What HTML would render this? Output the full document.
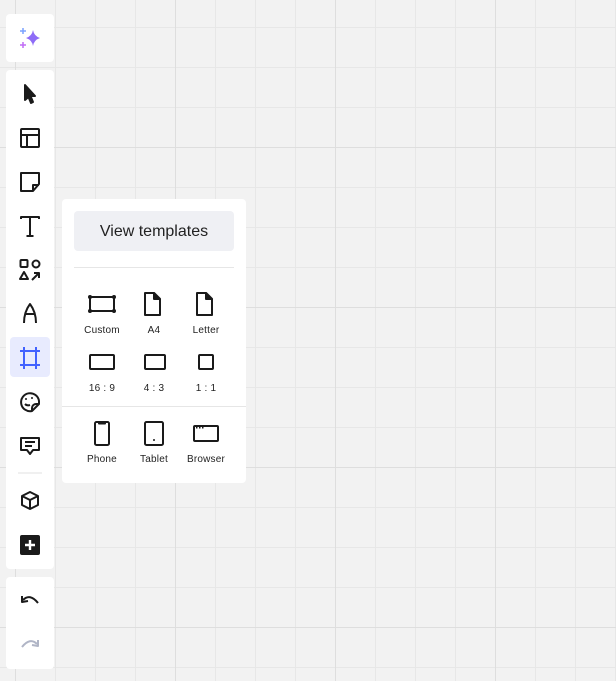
<!DOCTYPE html>
<html><head><style>
*{margin:0;padding:0;box-sizing:border-box}
body{width:616px;height:681px;overflow:hidden;background:#f2f2f2;font-family:"Liberation Sans",sans-serif;position:relative;
background-image:
linear-gradient(to right,#dedede 1px,transparent 1px),
linear-gradient(to bottom,#dedede 1px,transparent 1px),
linear-gradient(to right,#e7e7e7 1px,transparent 1px),
linear-gradient(to bottom,#e7e7e7 1px,transparent 1px);
background-size:160px 160px,160px 160px,40px 40px,40px 40px;
background-position:15px 0,0 -13px,15px 0,0 27px;}
.g{position:absolute;left:6px;width:48px;background:#fff;border-radius:4px}
svg{position:absolute}
.p{position:absolute;left:62px;top:199px;width:184px;height:284px;background:#fff;border-radius:4px}
.btn{position:absolute;left:12px;top:12px;width:160px;height:40px;background:#eff0f4;border-radius:4px;font-size:16px;color:#222;text-align:center;line-height:42px}
.lb{position:absolute;width:60px;text-align:center;font-size:10px;color:#222;letter-spacing:0.2px}
</style></head><body>
<div class="g" style="top:14px;height:48px"></div>
<div class="g" style="top:70px;height:499px"></div>
<div class="g" style="top:577px;height:92px"></div>
<div style="position:absolute;left:10px;top:337px;width:40px;height:40px;background:#e8ebfe;border-radius:4px"></div>

<svg width="616" height="681" style="left:0;top:0" fill="none" stroke="#1a1a1a" stroke-width="2" stroke-linejoin="round">
<path d="M33 30 Q34 36 40 38 Q34 40 33 46 Q32 40 26 38 Q32 36 33 30Z" fill="#8e6cf7" stroke="none"/>
<path d="M23 28v6M20 31h6" stroke="#7aa2ff" stroke-width="1.5"/>
<path d="M23 42v6M20 45h6" stroke="#c06cf5" stroke-width="1.5"/>
<path d="M25 85 L25 100 L28.5 97 L31 103 L33 102 L30.5 96 L35 96Z" fill="#1a1a1a"/>
<rect x="21" y="129" width="18" height="18" rx="1"/><path d="M21 135h18M27 135v12"/>
<path d="M21 173h18v11l-6 7h-12Z"/><path d="M33 191v-6h6"/>
<path d="M21 219v-2h18v2M30 217v19M26.5 236h7"/>
<rect x="20.5" y="260" width="7" height="7" rx="1"/><circle cx="36" cy="264" r="3.5"/><path d="M24 272l4 7h-8Z"/><path d="M32 280l7-7M34 273h5v5"/>
<path d="M24 323 Q24 312 30 304 Q36 312 36 323M26 314h8"/>
<g stroke="#4262ff"><path d="M24 347v22M36 347v22M20 351h20M20 365h20"/></g>
<path d="M39 401a9 9 0 1 0-7 10l7-7Z"/><path d="M32 411v-3a4 4 0 0 1 4-4h3"/><circle cx="26" cy="399" r="1" fill="#1a1a1a" stroke="none"/><circle cx="32" cy="398" r="1" fill="#1a1a1a" stroke="none"/><path d="M25 404q2 2 5 1"/>
<path d="M21 438h18v12h-6l-3 4-3-4h-6Z"/><path d="M25 442h10M25 446h7"/>
<path d="M18 473h24" stroke="#e0e0e0" stroke-width="1"/>
<path d="M30 492l8 4v9l-8 4-8-4v-9Z M22 496l8 4 8-4M30 500v9"/>
<rect x="20" y="535" width="20" height="20" rx="2" fill="#1a1a1a" stroke="none"/><path d="M30 540v10M25 545h10" stroke="#fff" stroke-width="2.4"/>
<path d="M23 600 Q30 593 38 603"/>
<path d="M22 596l0 6 6-1"/>
<path d="M37 600 Q30 593 22 603" stroke="#b0b5c6" transform="translate(0,44)"/>
<path d="M38 640l0 6-6-1" stroke="#b0b5c6"/>
</svg>

<div class="p">
<div class="btn">View templates</div>
<div style="position:absolute;left:12px;top:68px;width:160px;height:1px;background:#e6e6e6"></div>
<div style="position:absolute;left:0;top:207px;width:184px;height:1px;background:#e6e6e6"></div>
<svg width="184" height="284" style="left:0;top:0" fill="none" stroke="#1a1a1a" stroke-width="2" stroke-linejoin="round">
<rect x="28" y="98" width="24" height="14"/><g fill="#1a1a1a" stroke="none"><circle cx="28" cy="98" r="2"/><circle cx="52" cy="98" r="2"/><circle cx="28" cy="112" r="2"/><circle cx="52" cy="112" r="2"/></g>
<path d="M83 94h9l6 6v16h-15Z"/><path d="M92 94l6 6h-6Z" fill="#1a1a1a"/>
<path d="M135 94h9l6 6v16h-15Z"/><path d="M144 94l6 6h-6Z" fill="#1a1a1a"/>
<rect x="28" y="156" width="24" height="14" rx="1"/>
<rect x="83" y="156" width="20" height="14" rx="1"/>
<rect x="137" y="156" width="14" height="14" rx="1"/>
<rect x="33" y="223" width="14" height="23" rx="1.5"/><path d="M37 223h6v1.5h-6Z" fill="#1a1a1a"/>
<rect x="83" y="223" width="18" height="23" rx="1.5"/><circle cx="92" cy="241" r="1" fill="#1a1a1a" stroke="none"/>
<rect x="132" y="227" width="24" height="15" rx="1"/><g fill="#1a1a1a" stroke="none"><rect x="134" y="228" width="1.5" height="1.5"/><rect x="137" y="228" width="1.5" height="1.5"/><rect x="140" y="228" width="1.5" height="1.5"/></g>
</svg>
<div class="lb" style="left:10px;top:126px">Custom</div>
<div class="lb" style="left:62px;top:126px">A4</div>
<div class="lb" style="left:114px;top:126px">Letter</div>
<div class="lb" style="left:10px;top:184px">16 : 9</div>
<div class="lb" style="left:62px;top:184px">4 : 3</div>
<div class="lb" style="left:114px;top:184px">1 : 1</div>
<div class="lb" style="left:10px;top:255px">Phone</div>
<div class="lb" style="left:62px;top:255px">Tablet</div>
<div class="lb" style="left:114px;top:255px">Browser</div>
</div>
</body></html>
